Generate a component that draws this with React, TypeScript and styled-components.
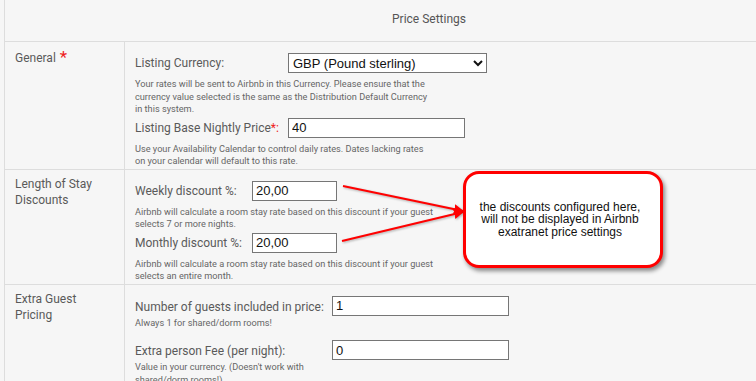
import React from 'react';
import styled, { createGlobalStyle } from 'styled-components';

const GlobalStyle = createGlobalStyle`
  html, body {
    margin: 0;
    padding: 0;
    background: #f6f6f6;
  }
  body {
    font-family: Roboto, "Liberation Sans", Arial, sans-serif;
    color: #555;
    overflow: hidden;
  }
`;

const Page = styled.div`
  position: relative;
  width: 756px;
  height: 381px;
  overflow: hidden;
`;

const Table = styled.div`
  margin-left: 4px;
  border-left: 1px solid #dddddd;
`;

const Header = styled.div`
  height: 41px;
  line-height: 38px;
  border-bottom: 1px solid #dddddd;
  padding-left: 97px;
  text-align: center;
  font-size: 12px;
  color: #555;
`;

const Row = styled.div`
  display: grid;
  grid-template-columns: 120px 1fr;
  border-bottom: 1px solid #dddddd;
`;

const RowLabel = styled.div<{ $top?: number }>`
  border-right: 1px solid #dddddd;
  padding: ${p => p.$top ?? 6}px 10px 0;
  font-size: 12px;
  line-height: 16px;
  color: #5a5a5a;
`;

const Required = styled.span`
  color: #ee1c1c;
  font-size: 17px;
  line-height: 10px;
  margin-left: 4px;
  vertical-align: -1px;
`;

const RowBody = styled.div`
  padding: 11px 10px 1px;
`;

const Field = styled.div<{ $labelWidth: number }>`
  display: grid;
  grid-template-columns: ${p => p.$labelWidth}px auto;
  column-gap: 5px;
  align-items: center;
  justify-content: start;
  & + & {
    margin-top: 2px;
  }
`;

const StackField = styled(Field)`
  align-items: start;
  & + & {
    margin-top: 11px;
  }
`;

const FieldLabel = styled.label`
  font-size: 12px;
  line-height: 16px;
  color: #5a5a5a;
  white-space: nowrap;
`;

const RedMark = styled.span`
  color: #ee1c1c;
`;

const Help = styled.div<{ $wide?: boolean; $max?: number }>`
  grid-column: ${p => (p.$wide ? '1 / -1' : 'auto')};
  max-width: ${p => p.$max ?? 297}px;
  margin-top: ${p => (p.$wide ? 5 : 2)}px;
  font-size: 9.2px;
  line-height: 12.5px;
  color: #666;
  white-space: normal;
`;

const TextInput = styled.input<{ $width: number }>`
  box-sizing: border-box;
  width: ${p => p.$width}px;
  height: 20px;
  margin: 0;
  padding: 0 3px;
  border: 1px solid #767676;
  border-radius: 0;
  background: #fff;
  color: #111;
  font: 13px "Liberation Sans", Arial, sans-serif;
`;

const Select = styled.select`
  box-sizing: border-box;
  width: 199px;
  height: 20px;
  margin: 0;
  border: 1px solid #767676;
  border-radius: 0;
  background: #fff;
  color: #111;
  font: 13px "Liberation Sans", Arial, sans-serif;
`;

const ArrowLayer = styled.svg`
  position: absolute;
  left: 0;
  top: 0;
  pointer-events: none;
  filter: drop-shadow(1px 1px 1px rgba(0, 0, 0, 0.3));
`;

const Callout = styled.div`
  position: absolute;
  left: 463px;
  top: 171px;
  width: 200px;
  height: 97px;
  box-sizing: border-box;
  padding-right: 6px;
  border: 3px solid #ff0000;
  border-radius: 16px;
  background: #fff;
  box-shadow: 2px 3px 4px rgba(0, 0, 0, 0.45);
  display: flex;
  align-items: center;
  justify-content: center;
  text-align: center;
  font: 12px/12.5px "Liberation Sans", Arial, sans-serif;
  color: #111;
`;

export default function App() {
  return (
    <Page>
      <GlobalStyle />
      <Table>
        <Header>Price Settings</Header>

        <Row>
          <RowLabel $top={8}>
            General<Required>*</Required>
          </RowLabel>
          <RowBody>
            <Field $labelWidth={148}>
              <FieldLabel>Listing Currency:</FieldLabel>
              <Select defaultValue="GBP">
                <option value="GBP">GBP (Pound sterling)</option>
              </Select>
              <Help $wide>
                Your rates will be sent to Airbnb in this Currency. Please ensure that the currency
                value selected is the same as the Distribution Default Currency in this system.
              </Help>
            </Field>
            <Field $labelWidth={148}>
              <FieldLabel>
                Listing Base Nightly Price<RedMark>*:</RedMark>
              </FieldLabel>
              <TextInput $width={177} defaultValue="40" />
              <Help $wide>
                Use your Availability Calendar to control daily rates. Dates lacking rates on your
                calendar will default to this rate.
              </Help>
            </Field>
          </RowBody>
        </Row>

        <Row>
          <RowLabel>Length of Stay Discounts</RowLabel>
          <RowBody>
            <Field $labelWidth={112}>
              <FieldLabel>Weekly discount %:</FieldLabel>
              <TextInput $width={85} defaultValue="20,00" />
              <Help $wide $max={312}>
                Airbnb will calculate a room stay rate based on this discount if your guest selects
                7 or more nights.
              </Help>
            </Field>
            <Field $labelWidth={112}>
              <FieldLabel>Monthly discount %:</FieldLabel>
              <TextInput $width={85} defaultValue="20,00" />
              <Help $wide $max={312}>
                Airbnb will calculate a room stay rate based on this discount if your guest selects
                an entire month.
              </Help>
            </Field>
          </RowBody>
        </Row>

        <Row>
          <RowLabel>Extra Guest Pricing</RowLabel>
          <RowBody>
            <StackField $labelWidth={192}>
              <div>
                <FieldLabel>Number of guests included in price:</FieldLabel>
                <Help>Always 1 for shared/dorm rooms!</Help>
              </div>
              <TextInput $width={177} defaultValue="1" />
            </StackField>
            <StackField $labelWidth={192}>
              <div>
                <FieldLabel>Extra person Fee (per night):</FieldLabel>
                <Help>Value in your currency. (Doesn't work with shared/dorm rooms!)</Help>
              </div>
              <TextInput $width={177} defaultValue="0" />
            </StackField>
          </RowBody>
        </Row>
      </Table>

      <ArrowLayer width="756" height="381" viewBox="0 0 756 381">
        <defs>
          <marker
            id="arrowHead"
            markerWidth="10"
            markerHeight="10"
            refX="9"
            refY="5"
            orient="auto"
            markerUnits="userSpaceOnUse"
          >
            <path d="M0,0 L10,5 L0,10 z" fill="#ff0000" />
          </marker>
        </defs>
        <line x1="343" y1="186" x2="463" y2="211" stroke="#ff0000" strokeWidth="2" markerEnd="url(#arrowHead)" />
        <line x1="342" y1="241" x2="463" y2="212" stroke="#ff0000" strokeWidth="2" markerEnd="url(#arrowHead)" />
      </ArrowLayer>

      <Callout>
        the discounts configured here,
        <br />
        will not be displayed in Airbnb
        <br />
        exatranet price settings
      </Callout>
    </Page>
  );
}
